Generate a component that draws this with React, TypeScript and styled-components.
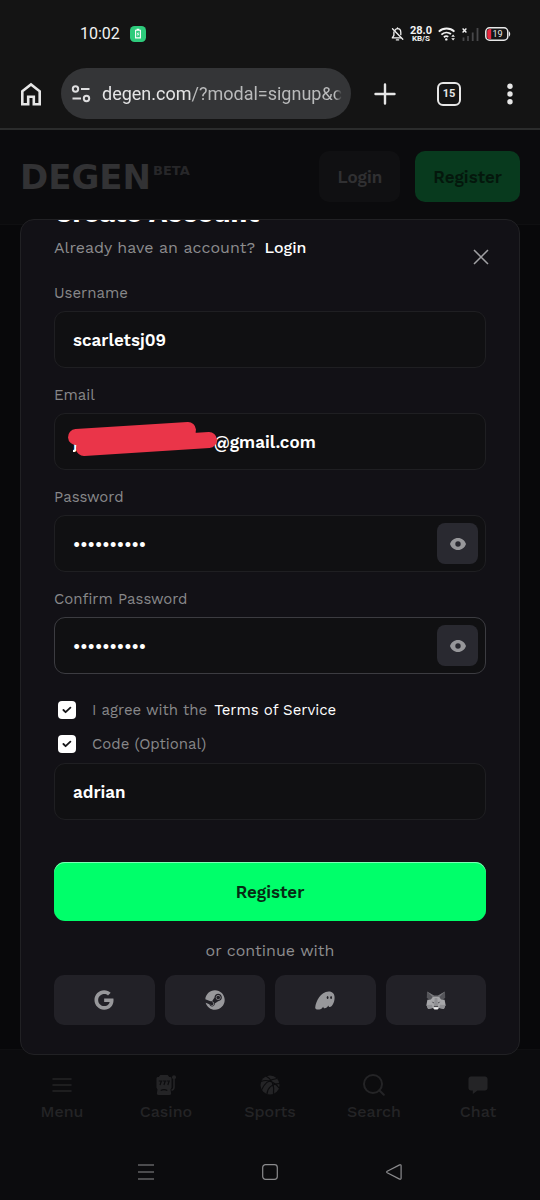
import React, { useState } from "react";
import styled, { createGlobalStyle } from "styled-components";
import { FaGoogle, FaSteam } from "react-icons/fa";

const sans = `"Work Sans", Inter, "Liberation Sans", sans-serif`;
const system = `Roboto, "Liberation Sans", sans-serif`;

const GlobalStyle = createGlobalStyle`
  *, *::before, *::after { box-sizing: border-box; }
  body { margin: 0; background: #0c0c0e; font-family: ${sans}; }
  button { font: inherit; border: 0; background: none; padding: 0; color: inherit; cursor: pointer; }
  h1, p { margin: 0; }
  a { text-decoration: none; }
  svg { display: block; flex: none; }
`;

const Screen = styled.div`
  display: flex;
  flex-direction: column;
  min-height: 100vh;
`;

/* ---------- phone status bar ---------- */

const StatusBar = styled.div`
  display: flex;
  align-items: center;
  height: 68px;
  padding: 0 29px 0 80px;
  background: #141414;
  color: #f2f2f2;
  font-family: ${system};
`;

const Clock = styled.span`
  font-size: 16px;
  line-height: 20px;
  margin-right: 10px;
`;

const StatusIcons = styled.div`
  display: flex;
  align-items: center;
  gap: 6px;
  margin-left: auto;
`;

const Speed = styled.span`
  display: flex;
  flex-direction: column;
  align-items: center;
  font-size: 11px;
  line-height: 9px;
  font-weight: 700;
`;

const SpeedUnit = styled.small`
  font-size: 8px;
  line-height: 8px;
`;

/* ---------- browser toolbar ---------- */

const Toolbar = styled.div`
  display: flex;
  align-items: center;
  height: 62px;
  padding: 0 27px 9px 20px;
  background: #141414;
  border-bottom: 2px solid #2b2c2c;
  color: #e6e6e6;
  font-family: ${system};
`;

const ToolButton = styled.button`
  display: grid;
  place-items: center;
`;

const AddressBar = styled.div`
  display: flex;
  flex: 1;
  min-width: 0;
  align-items: center;
  gap: 11px;
  height: 51px;
  margin: 0 23px 0 19px;
  padding: 0 9px 0 10px;
  border-radius: 26px;
  background: #343537;
`;

const Url = styled.span`
  flex: 1;
  min-width: 0;
  overflow: hidden;
  white-space: nowrap;
  font-size: 18px;
  line-height: 26px;
  color: #b9babb;
  mask-image: linear-gradient(to right, #000 97%, transparent);
`;

const Host = styled.span`
  color: #e4e4e5;
`;

const TabCount = styled.button`
  width: 24px;
  height: 24px;
  margin: 0 46px 0 41px;
  border: 2px solid #e6e6e6;
  border-radius: 6px;
  font-size: 11px;
  line-height: 20px;
  font-weight: 700;
`;

/* ---------- site header ---------- */

const SiteHeader = styled.header`
  display: flex;
  align-items: flex-start;
  height: 95px;
  padding: 21px 20px 0;
  background: #0b0b0d;
  border-bottom: 1px solid #0f0f11;
`;

const Brand = styled.a`
  display: flex;
  align-items: flex-start;
  margin: 10px auto 0 0;
  font-family: "DejaVu Sans", sans-serif;
  font-weight: 700;
  font-size: 34px;
  line-height: 32px;
  color: #323234;
`;

const Beta = styled.sup`
  margin: 2px 0 0 2px;
  font-size: 13px;
  line-height: 16px;
  color: #272729;
`;

const HeaderButton = styled.button<{ $primary?: boolean }>`
  height: 51px;
  margin-left: 15px;
  padding: 0 18px;
  border-radius: 10px;
  font-size: 17px;
  line-height: 24px;
  font-weight: 600;
  background: ${(p) => (p.$primary ? "#083a1e" : "#101012")};
  color: ${(p) => (p.$primary ? "#04170c" : "#303032")};
`;

/* ---------- sign-up dialog ---------- */

const Backdrop = styled.main`
  padding: 0 20px;
  background: #08080a;
`;

const Dialog = styled.section`
  position: relative;
  margin: -6px 0;
  padding: 0 33px 29px;
  overflow: hidden;
  border: 1px solid #212124;
  border-radius: 14px;
  background: #121116;
`;

const DialogHead = styled.div`
  display: flex;
  align-items: flex-end;
  justify-content: space-between;
  margin: -23px -5px 16px 0;
`;

const Title = styled.h1`
  font-size: 27px;
  line-height: 32px;
  font-weight: 700;
  color: #fff;
`;

const Subtitle = styled.p`
  margin: 9px 0;
  font-size: 16px;
  line-height: 20px;
  color: #8c8c8e;
`;

const LoginLink = styled.a`
  margin-left: 4px;
  color: #fff;
  font-weight: 500;
`;

const TermsLink = styled.a`
  margin-left: 2px;
  color: #fff;
`;

const CloseButton = styled.button`
  display: grid;
  place-items: center;
  width: 20px;
  height: 20px;
`;

const Form = styled.form`
  display: flex;
  flex-direction: column;
`;

const Field = styled.div`
  display: flex;
  flex-direction: column;
  gap: 8px;
  margin-bottom: 17px;
`;

const Label = styled.label`
  font-size: 15px;
  line-height: 20px;
  color: #88888a;
`;

const InputBox = styled.div<{ $active?: boolean }>`
  position: relative;
  display: flex;
  align-items: center;
  height: 57px;
  padding-right: 7px;
  border: 1px solid ${(p) => (p.$active ? "#3c3c41" : "#1f1f22")};
  border-radius: 11px;
  background: #101012;
`;

const Input = styled.input`
  flex: 1;
  min-width: 0;
  height: 100%;
  padding: 0 18px;
  border: 0;
  outline: 0;
  background: transparent;
  color: #fff;
  font-family: ${sans};
  font-size: 17px;
  font-weight: 600;
`;

const RevealButton = styled.button`
  display: grid;
  place-items: center;
  width: 41px;
  height: 41px;
  border-radius: 8px;
  background: #292930;
  color: #97979a;
`;

const Marker = styled.svg`
  position: absolute;
  left: 12px;
  top: 7px;
`;

const CheckRow = styled.div`
  display: flex;
  align-items: center;
  gap: 16px;
  height: 20px;
  margin-bottom: 14px;
  padding-left: 4px;
`;

const Tick = styled.span`
  display: grid;
  & > * { grid-area: 1 / 1; place-self: center; }
  & > svg { pointer-events: none; }
`;

const Checkbox = styled.input`
  appearance: none;
  width: 18px;
  height: 18px;
  margin: 0;
  border-radius: 4px;
  background: #fff;
`;

const Agreements = styled.div`
  margin: 9px 0 -5px;
`;

const SubmitButton = styled.button`
  height: 59px;
  margin: 42px 0 20px;
  border-radius: 11px;
  background: #00ff6a;
  box-shadow: inset 0 1px 0 #7dffb4;
  color: #062c14;
  font-size: 17px;
  line-height: 24px;
  font-weight: 600;
`;

const Divider = styled.p`
  margin-bottom: 14px;
  text-align: center;
  font-size: 16px;
  line-height: 20px;
  color: #8c8c8e;
`;

const SocialGrid = styled.div`
  display: grid;
  grid-template-columns: repeat(4, 1fr);
  gap: 10px;
`;

const SocialButton = styled.button`
  display: grid;
  place-items: center;
  height: 50px;
  border-radius: 10px;
  background: #222127;
  color: #98989b;
`;

/* ---------- bottom bars ---------- */

const TabBar = styled.nav`
  display: flex;
  padding: 24px 10px 0;
  border-top: 1px solid #0f0f11;
  background: #0c0c0e;
`;

const Tab = styled.a`
  display: flex;
  flex: 1;
  flex-direction: column;
  align-items: center;
  gap: 6px;
  font-size: 16px;
  line-height: 20px;
  font-weight: 500;
  color: #242426;
`;

const TabIcon = styled.span`
  display: grid;
  place-items: center;
  height: 22px;
`;

const SystemBar = styled.div`
  display: flex;
  justify-content: space-around;
  align-items: center;
  width: 100%;
  max-width: 372px;
  height: 56px;
  margin: auto auto 0;
`;

/* ---------- drawings ---------- */

const ChargeBadge = () => (
  <svg width="16" height="16" viewBox="0 0 16 16" fill="none">
    <rect width="16" height="16" rx="4.5" fill="#2ecb7c" />
    <path d="M6.6 3.2h2.8M5.6 4.3h4.8v7.6H5.6z" stroke="#fff" strokeWidth="1.1" />
    <path d="M8.4 5.7 6.7 8.3h1l-.2 2.1 1.8-2.7h-1z" fill="#fff" />
  </svg>
);

const BellOffIcon = () => (
  <svg width="13" height="14" viewBox="0 0 13 14" fill="none" stroke="#f2f2f2" strokeWidth="1.3" strokeLinejoin="round" strokeLinecap="round">
    <path d="M4.100 3.200C4.700 2.200 5.500 1.700 6.500 1.700c2 0 3.300 1.500 3.300 3.600V7.700M2.900 5v3.400L1.300 10.900H9.800" />
    <path d="M1.500 1.800 11.800 12.300M5.400 12.900h2.200M6.500 .8v.8" />
  </svg>
);

const WifiIcon = () => (
  <svg width="18" height="14" viewBox="0 0 18 14" fill="none" stroke="#f2f2f2" strokeWidth="1.8">
    <path d="M.8 4.6a11.4 11.4 0 0 1 15.6 0" />
    <path d="M3.4 7.6a7.5 7.5 0 0 1 9.6-.6" />
    <path d="M5.9 10.2a3.8 3.8 0 0 1 4.4-.4" />
    <circle cx="8.3" cy="12.4" r="1.2" fill="#f2f2f2" stroke="none" />
    <path d="m13.3 9.7 1.8-2.2 1.8 2.2zM13.3 11.2l1.8 2.2 1.8-2.2z" fill="#f2f2f2" stroke="none" />
  </svg>
);

const SignalIcon = () => (
  <svg width="17" height="14" viewBox="0 0 17 14" fill="none">
    <path d="M1.5 10.5V14M6 9v5M10.7 5.5V14M15.5 1v13" stroke="#48484a" strokeWidth="1.8" />
    <path d="m.6 1.6 3.8 3.8M4.4 1.6.6 5.4" stroke="#f2f2f2" strokeWidth="1.4" />
  </svg>
);

const BatteryIcon = () => (
  <svg width="26" height="14" viewBox="0 0 26 14">
    <rect x=".8" y=".8" width="22" height="12.4" rx="3.8" fill="none" stroke="#e8e8e8" strokeWidth="1.5" />
    <path d="M2.2 4.5a2.6 2.6 0 0 1 2.6-2.6H6.200V12.100H4.800a2.6 2.6 0 0 1-2.600-2.600z" fill="#e8283f" />
    <path d="M24 4.500c1.600.4 1.600 4.600 0 5z" fill="#e8e8e8" />
    <text x="12.500" y="10.300" textAnchor="middle" fontFamily="Roboto, sans-serif" fontSize="9" fill="#e8e8e8">19</text>
  </svg>
);

const HomeIcon = () => (
  <svg width="22" height="24" viewBox="0 0 22 24" fill="none" stroke="#e6e6e6" strokeWidth="2.6">
    <path d="M2.300 9.300 11 2.500l8.700 6.800v12.900h-5.900v-7.400H8.200v7.400H2.300z" />
  </svg>
);

const TuneIcon = () => (
  <svg width="20" height="18" viewBox="0 0 20 18" fill="none" stroke="#dededf" strokeWidth="2">
    <circle cx="4.5" cy="4" r="2.7" />
    <path d="M10 4h8.500M1.500 13.500H10" />
    <circle cx="15.5" cy="13.5" r="2.7" />
  </svg>
);

const PlusIcon = () => (
  <svg width="22" height="22" viewBox="0 0 22 22" stroke="#e6e6e6" strokeWidth="2.4" strokeLinecap="round">
    <path d="M11 1.500v19M1.500 11h19" />
  </svg>
);

const MoreIcon = () => (
  <svg width="6" height="22" viewBox="0 0 6 22" fill="#e6e6e6">
    <circle cx="3" cy="3.3" r="2.7" />
    <circle cx="3" cy="11" r="2.7" />
    <circle cx="3" cy="18.7" r="2.7" />
  </svg>
);

const CloseIcon = () => (
  <svg width="16" height="16" viewBox="0 0 16 16" stroke="#a0a0a3" strokeWidth="1.5">
    <path d="m1 1 14 14M15 1 1 15" />
  </svg>
);

const EyeIcon = () => (
  <svg width="16" height="12" viewBox="0 0 16 12">
    <path
      fill="currentColor"
      fillRule="evenodd"
      d="M8 0c3.900 0 6.800 2.400 8 6-1.200 3.600-4.100 6-8 6S1.200 9.600 0 6c1.200-3.600 4.100-6 8-6zm0 3.300a2.700 2.700 0 1 0 0 5.400 2.700 2.700 0 0 0 0-5.400z"
    />
  </svg>
);

const TickMark = () => (
  <svg width="10" height="8" viewBox="0 0 10 8" fill="none" stroke="#151518" strokeWidth="1.8">
    <path d="m1.400 4 2.200 2.200 4.800-4.500" strokeLinecap="round" strokeLinejoin="round" />
  </svg>
);

const GhostIcon = () => (
  <svg width="20" height="19" viewBox="0 0 20 19">
    <path
      fill="currentColor"
      d="M.2 16.400C.8 10.500 5.600.6 13.700.5c3.800 0 6 2.500 5.900 6.200-.1 4.600-2.500 9.200-4.800 9.200-1 0-1.300-.7-1.300-1.500-1 1.500-2.400 2.800-3.800 2.800-1 0-1.500-.6-1.500-1.500-1 1.400-2.300 2.700-4 2.800C2.300 18.700.1 18.300.2 16.400z"
    />
    <ellipse cx="12.6" cy="6.4" rx=".9" ry="1.5" fill="#222127" />
    <ellipse cx="16.1" cy="6.4" rx=".9" ry="1.5" fill="#222127" />
  </svg>
);

const FoxIcon = () => (
  <svg width="20" height="19" viewBox="0 0 20 19">
    <path fill="#55555a" d="M1 .5 8 4.500h4L19 .5l.2 6.500L15 9.500H5L.8 7z" />
    <path fill="#77777b" d="m1 .5 7.200 4.300h3.600L19 .5l-5.600 5.500L13 9.500H7l-.4-3.500z" />
    <path fill="#a6a6a9" d="M6.800 6h6.400l1.900 2.500 3.500.2 1 5.200-1.700 4-4.600-1-1.700 1.600H8.400l-1.700-1.600-4.600 1-1.700-4 1-5.200 3.500-.2z" />
    <path fill="#8f8f93" d="m.4 13.900 5.500-.2.800 3.200-4.600 1zM19.600 13.900l-5.500-.2-.8 3.200 4.600 1zM8.700 7h2.600l.6 7H8.100z" />
    <path fill="#47474c" d="m5.600 10.500 2.500 1.100-.6 1zM14.400 10.500l-2.500 1.100.6 1zM8 14.800h4l.2 1.500H7.800z" />
    <path fill="#f2f2f3" d="M7.500 16.200h5l-.9 2.100H8.400z" />
  </svg>
);

const MenuIcon = () => (
  <svg width="20" height="20" viewBox="0 0 20 20" stroke="currentColor" strokeWidth="1.6" strokeLinecap="round">
    <path d="M1 4h18M1 10h18M1 16h18" />
  </svg>
);

const SlotIcon = () => (
  <svg width="20" height="20" viewBox="0 0 20 20" fill="none">
    <path fill="currentColor" d="M4.300 0h7.400l1.500 2H14c1 0 1.500.6 1.500 1.500v9.300l-1 1.700.6 3.500c.2 1.200-.5 2-1.600 2h-11c-1.100 0-1.800-.8-1.600-2l.6-3.500-1-1.700V3.500C.5 2.600 1 2 2 2h.8z" />
    <path stroke="#0c0c0e" strokeWidth="1.2" d="M2.800 6h2.600L4 10M6.700 6h2.600l-1.400 4M10.600 6h2.600l-1.400 4M4.700 15.500c2-1 4.600-1 6.600 0" />
    <path stroke="currentColor" strokeWidth="1.6" d="M18 3v9c0 2-1 3-2.500 3.300" />
    <circle cx="18" cy="2.2" r="2" fill="currentColor" />
  </svg>
);

const BallIcon = () => (
  <svg width="20" height="20" viewBox="0 0 20 20" fill="none">
    <circle cx="10" cy="10" r="9.5" fill="currentColor" />
    <g stroke="#0c0c0e" strokeWidth="1.2">
      <path d="M1 6.500C7 4 14.500 6.500 19 13M6 1c6 3 8.500 9.500 7.500 18" />
      <path d="M1.500 15C4 9 9.500 4.500 17 3.500M7 19c.5-5.500 4.500-10 12.500-10.500" />
    </g>
  </svg>
);

const SearchIcon = () => (
  <svg width="24" height="22" viewBox="0 0 24 22" fill="none" stroke="currentColor" strokeWidth="2">
    <circle cx="11" cy="10" r="9" />
    <path d="m17.300 16.300 4.500 4.500" strokeLinecap="round" />
  </svg>
);

const ChatIcon = () => (
  <svg width="20" height="20" viewBox="0 0 20 20" fill="currentColor">
    <path d="M3 1.500h14c1.500 0 2.500 1 2.500 2.500v9c0 1.500-1 2.500-2.500 2.500h-7.500L4.800 19v-3.500H3C1.500 15.500.5 14.500.5 13V4c0-1.500 1-2.500 2.500-2.500z" />
  </svg>
);

const RecentsIcon = () => (
  <svg width="16" height="16" viewBox="0 0 16 16" stroke="#8b8b8d" strokeWidth="1.2">
    <path d="M0 1h16M0 8h16M0 15h16" />
  </svg>
);

const SquareIcon = () => (
  <svg width="16" height="16" viewBox="0 0 16 16" fill="none" stroke="#8b8b8d" strokeWidth="1.2">
    <rect x=".7" y=".7" width="14.6" height="14.6" rx="2.8" />
  </svg>
);

const BackIcon = () => (
  <svg width="16" height="16" viewBox="0 0 16 16" fill="none" stroke="#8b8b8d" strokeWidth="1.2">
    <path d="M1.200 7.300 13.600.9c.8-.4 1.500 0 1.500.8v12.600c0 .8-.7 1.200-1.500.8L1.200 8.700c-.7-.4-.7-1 0-1.400z" />
  </svg>
);

/* ---------- page ---------- */

const tabs = [
  { label: "Menu", Icon: MenuIcon },
  { label: "Casino", Icon: SlotIcon },
  { label: "Sports", Icon: BallIcon },
  { label: "Search", Icon: SearchIcon },
  { label: "Chat", Icon: ChatIcon },
];

const socials = [
  { name: "Google", icon: <FaGoogle size={20} /> },
  { name: "Steam", icon: <FaSteam size={20} /> },
  { name: "Phantom", icon: <GhostIcon /> },
  { name: "MetaMask", icon: <FoxIcon /> },
];

const hiddenPart = "\u2003".repeat(8);

type PasswordFieldProps = { id: string; label: string; active?: boolean };

function PasswordField({ id, label, active }: PasswordFieldProps) {
  const [shown, setShown] = useState(false);
  return (
    <Field>
      <Label htmlFor={id}>{label}</Label>
      <InputBox $active={active}>
        <Input id={id} type={shown ? "text" : "password"} defaultValue="0123456789" />
        <RevealButton type="button" aria-label={`Show ${label}`} onClick={() => setShown(!shown)}>
          <EyeIcon />
        </RevealButton>
      </InputBox>
    </Field>
  );
}

export default function App() {
  return (
    <Screen>
      <GlobalStyle />
      <StatusBar>
        <Clock>10:02</Clock>
        <ChargeBadge />
        <StatusIcons>
          <BellOffIcon />
          <Speed>
            28.0
            <SpeedUnit>KB/S</SpeedUnit>
          </Speed>
          <WifiIcon />
          <SignalIcon />
          <BatteryIcon />
        </StatusIcons>
      </StatusBar>
      <Toolbar>
        <ToolButton aria-label="Home">
          <HomeIcon />
        </ToolButton>
        <AddressBar>
          <TuneIcon />
          <Url>
            <Host>degen.com</Host>/?modal=signup&amp;c
          </Url>
        </AddressBar>
        <ToolButton aria-label="New tab">
          <PlusIcon />
        </ToolButton>
        <TabCount aria-label="Open tabs">15</TabCount>
        <ToolButton aria-label="More">
          <MoreIcon />
        </ToolButton>
      </Toolbar>

      <SiteHeader>
        <Brand href="#">
          DEGEN<Beta>BETA</Beta>
        </Brand>
        <HeaderButton>Login</HeaderButton>
        <HeaderButton $primary>Register</HeaderButton>
      </SiteHeader>

      <Backdrop>
        <Dialog role="dialog" aria-labelledby="signup-title">
          <DialogHead>
            <div>
              <Title id="signup-title">Create Account</Title>
              <Subtitle>
                Already have an account? <LoginLink href="#">Login</LoginLink>
              </Subtitle>
            </div>
            <CloseButton aria-label="Close">
              <CloseIcon />
            </CloseButton>
          </DialogHead>

          <Form onSubmit={(e) => e.preventDefault()}>
            <Field>
              <Label htmlFor="username">Username</Label>
              <InputBox>
                <Input id="username" defaultValue="scarletsj09" />
              </InputBox>
            </Field>
            <Field>
              <Label htmlFor="email">Email</Label>
              <InputBox>
                <Input id="email" defaultValue={`j${hiddenPart}@gmail.com`} />
                <Marker width="152" height="38" viewBox="0 0 152 38" stroke="#ea3549" strokeWidth="16" strokeLinecap="round">
                  <path d="m9 16 112-7M17 27l125-8" />
                </Marker>
              </InputBox>
            </Field>
            <PasswordField id="password" label="Password" />
            <PasswordField id="confirm" label="Confirm Password" active />

            <Agreements>
              <CheckRow>
                <Tick>
                  <Checkbox id="terms" type="checkbox" defaultChecked />
                  <TickMark />
                </Tick>
                <Label htmlFor="terms">
                  I agree with the <TermsLink href="#">Terms of Service</TermsLink>
                </Label>
              </CheckRow>
              <CheckRow>
                <Tick>
                  <Checkbox id="has-code" type="checkbox" defaultChecked />
                  <TickMark />
                </Tick>
                <Label htmlFor="has-code">Code (Optional)</Label>
              </CheckRow>
            </Agreements>
            <InputBox>
              <Input aria-label="Code" defaultValue="adrian" />
            </InputBox>

            <SubmitButton type="submit">Register</SubmitButton>
            <Divider>or continue with</Divider>
            <SocialGrid>
              {socials.map((s) => (
                <SocialButton key={s.name} type="button" aria-label={s.name}>
                  {s.icon}
                </SocialButton>
              ))}
            </SocialGrid>
          </Form>
        </Dialog>
      </Backdrop>

      <TabBar>
        {tabs.map(({ label, Icon }) => (
          <Tab key={label} href="#">
            <TabIcon>
              <Icon />
            </TabIcon>
            {label}
          </Tab>
        ))}
      </TabBar>
      <SystemBar>
        <ToolButton aria-label="Recent apps">
          <RecentsIcon />
        </ToolButton>
        <ToolButton aria-label="Home screen">
          <SquareIcon />
        </ToolButton>
        <ToolButton aria-label="Back">
          <BackIcon />
        </ToolButton>
      </SystemBar>
    </Screen>
  );
}
